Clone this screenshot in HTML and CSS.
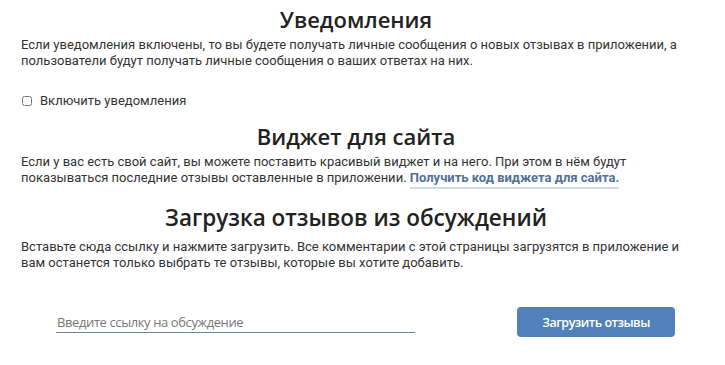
FILE: index.html
```html
<!DOCTYPE html>
<html lang="ru">
<head>
<meta charset="utf-8">
<title>Настройки</title>
<link rel="stylesheet" href="styles.css">
</head>
<body>
<div class="page">
  <section class="block block-notify">
    <h2 class="title">Уведомления</h2>
    <p class="text">Если уведомления включены, то вы будете получать личные сообщения о новых отзывах в приложении, а пользователи будут получать личные сообщения о ваших ответах на них.</p>
    <label class="check"><input type="checkbox" class="check-box"><span>Включить уведомления</span></label>
  </section>
  <section class="block block-widget">
    <h2 class="title">Виджет для сайта</h2>
    <p class="text">Если у вас есть свой сайт, вы можете поставить красивый виджет и на него. При этом в нём будут показываться последние отзывы оставленные в приложении. <a class="link" href="#">Получить код виджета для сайта.</a></p>
  </section>
  <section class="block block-load">
    <h2 class="title">Загрузка отзывов из обсуждений</h2>
    <p class="text">Вставьте сюда ссылку и нажмите загрузить. Все комментарии с этой страницы загрузятся в приложение и вам останется только выбрать те отзывы, которые вы хотите добавить.</p>
    <div class="load-row">
      <input class="url-input" type="text" placeholder="Введите ссылку на обсуждение">
      <button class="load-btn" type="button">Загрузить отзывы</button>
    </div>
  </section>
</div>
</body>
</html>
```

FILE: styles.css
```css
html, body {
  margin: 0;
  padding: 0;
  background: #ffffff;
}
.page {
  width: 670px;
  margin-left: 21px;
  font-family: Roboto, "Noto Sans", sans-serif;
  color: #333333;
}
.title {
  margin: 0;
  font-family: "Open Sans", "Noto Sans", sans-serif;
  font-weight: 600;
  font-size: 22px;
  line-height: 30px;
  color: #222222;
  text-align: center;
}
.block-notify .title {
  padding-top: 4px;
}
.text {
  margin: 3px 0 0;
  font-size: 13px;
  line-height: 16px;
}
.check {
  display: flex;
  align-items: center;
  gap: 8px;
  margin-top: 24px;
  font-size: 13px;
  line-height: 16px;
}
.check-box {
  margin: 0 0 0 1px;
  width: 10px;
  height: 10px;
}
.block-widget {
  margin-top: 12px;
}
.block-load {
  margin-top: 17px;
}
.block-load .title {
  font-size: 22.5px;
}
.block-load .text {
  margin-top: 6px;
}
.link {
  color: #50729a;
  font-weight: 700;
  text-decoration: none;
  border-bottom: 2px solid #d3d9e0;
  padding-bottom: 2px;
}
.load-row {
  display: flex;
  align-items: center;
  padding-left: 35px;
  margin-top: 36px;
}
.url-input {
  width: 359px;
  height: 21px;
  box-sizing: border-box;
  border: none;
  border-bottom: 1px solid #6f8796;
  padding: 0 1px;
  font-family: "Open Sans", sans-serif;
  font-size: 13px;
  letter-spacing: -0.4px;
  color: #333;
  outline: none;
}
.url-input::placeholder {
  color: #777777;
}
.load-btn {
  margin-left: auto;
  margin-right: 16px;
  width: 158px;
  height: 30px;
  border: none;
  border-radius: 4px;
  background: #5181b8;
  color: #ffffff;
  font-family: "Open Sans", sans-serif;
  font-weight: 600;
  font-size: 12.5px;
  letter-spacing: -0.5px;
  cursor: pointer;
}
```
